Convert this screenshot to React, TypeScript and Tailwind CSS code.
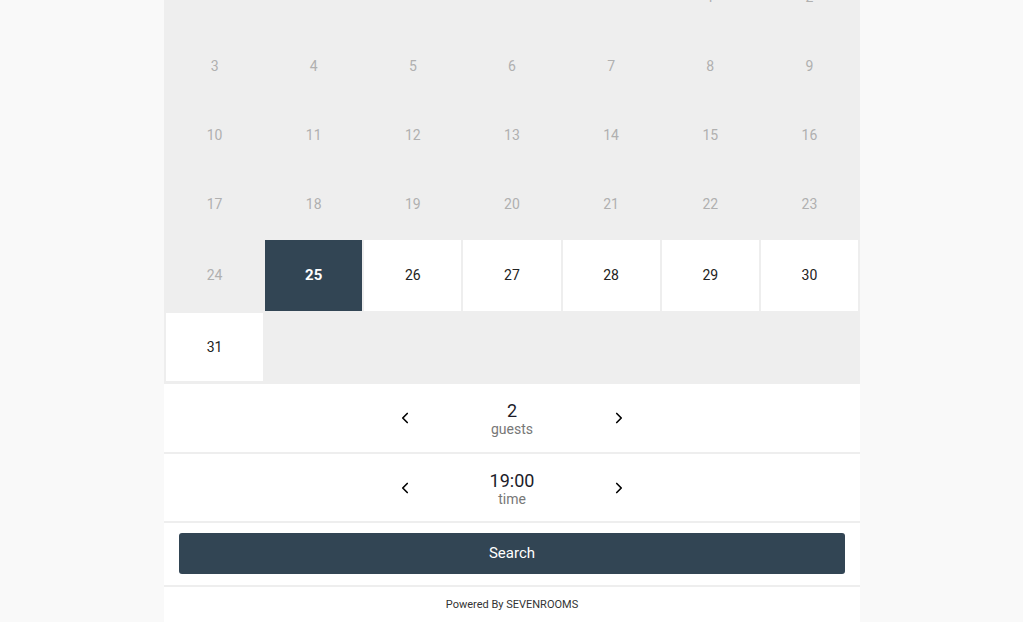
import { ChevronLeft, ChevronRight } from 'lucide-react'

type Day = { n: number | null; state: 'off' | 'open' | 'selected' | 'empty' }

const DAYS: Day[] = [
  ...[null, null, null, null, null].map(() => ({ n: null, state: 'empty' as const })),
  { n: 1, state: 'off' },
  { n: 2, state: 'off' },
  ...Array.from({ length: 22 }, (_, i) => ({ n: i + 3, state: 'off' as const })),
  { n: 25, state: 'selected' },
  ...[26, 27, 28, 29, 30, 31].map((n) => ({ n, state: 'open' as const })),
  ...Array.from({ length: 6 }, () => ({ n: null, state: 'empty' as const })),
]

function Stepper({ value, label, h }: { value: string; label: string; h: string }) {
  return (
    <div className={`flex items-center justify-center ${h}`}>
      <button className="flex w-[40px] justify-center text-black">
        <ChevronLeft size={18} strokeWidth={2.2} />
      </button>
      <div className="flex w-[174px] flex-col items-center pt-[2px] leading-none">
        <span className="text-[18px] text-[#1c1c2a]">{value}</span>
        <span className="mt-[2px] text-[14px] text-[#777]">{label}</span>
      </div>
      <button className="flex w-[40px] justify-center text-black">
        <ChevronRight size={18} strokeWidth={2.2} />
      </button>
    </div>
  )
}

export default function App() {
  return (
    <div className="h-[622px] overflow-hidden bg-[#f9f9f9] pl-[1px] font-['Roboto',sans-serif]">
      <div className="mx-auto w-[696px] bg-white">
        {/* calendar */}
        <div className="mt-[-38px] grid grid-cols-7 grid-rows-[67px_67px_67px_67px_71px_68px] gap-[2px] bg-[#eeeeee] px-[2px] pt-[2px] pb-[3px]">
          {DAYS.map((d, i) => {
            let cls = 'flex items-center justify-center text-[14px] '
            if (d.state === 'selected') cls += 'bg-[#324554] text-white font-bold text-[15px]'
            else if (d.state === 'open') cls += 'bg-white text-[#222]'
            else cls += 'text-[#b0b0b0]'
            return (
              <div key={i} className={cls}>
                {d.n}
              </div>
            )
          })}
        </div>

        <Stepper value="2" label="guests" h="h-[68px]" />
        <div className="h-[2px] bg-[#eeeeee]" />
        <Stepper value="19:00" label="time" h="h-[67px]" />
        <div className="h-[2px] bg-[#eeeeee]" />

        <div className="px-[15px] pt-[10px] pb-[11px]">
          <button className="h-[41px] w-full rounded-[3px] bg-[#324554] text-[15px] text-white">
            Search
          </button>
        </div>
        <div className="h-[2px] bg-[#eeeeee]" />
        <div className="pt-[10px] pb-[20px] text-center text-[11px] text-[#333]">
          Powered By SEVENROOMS
        </div>
      </div>
    </div>
  )
}
